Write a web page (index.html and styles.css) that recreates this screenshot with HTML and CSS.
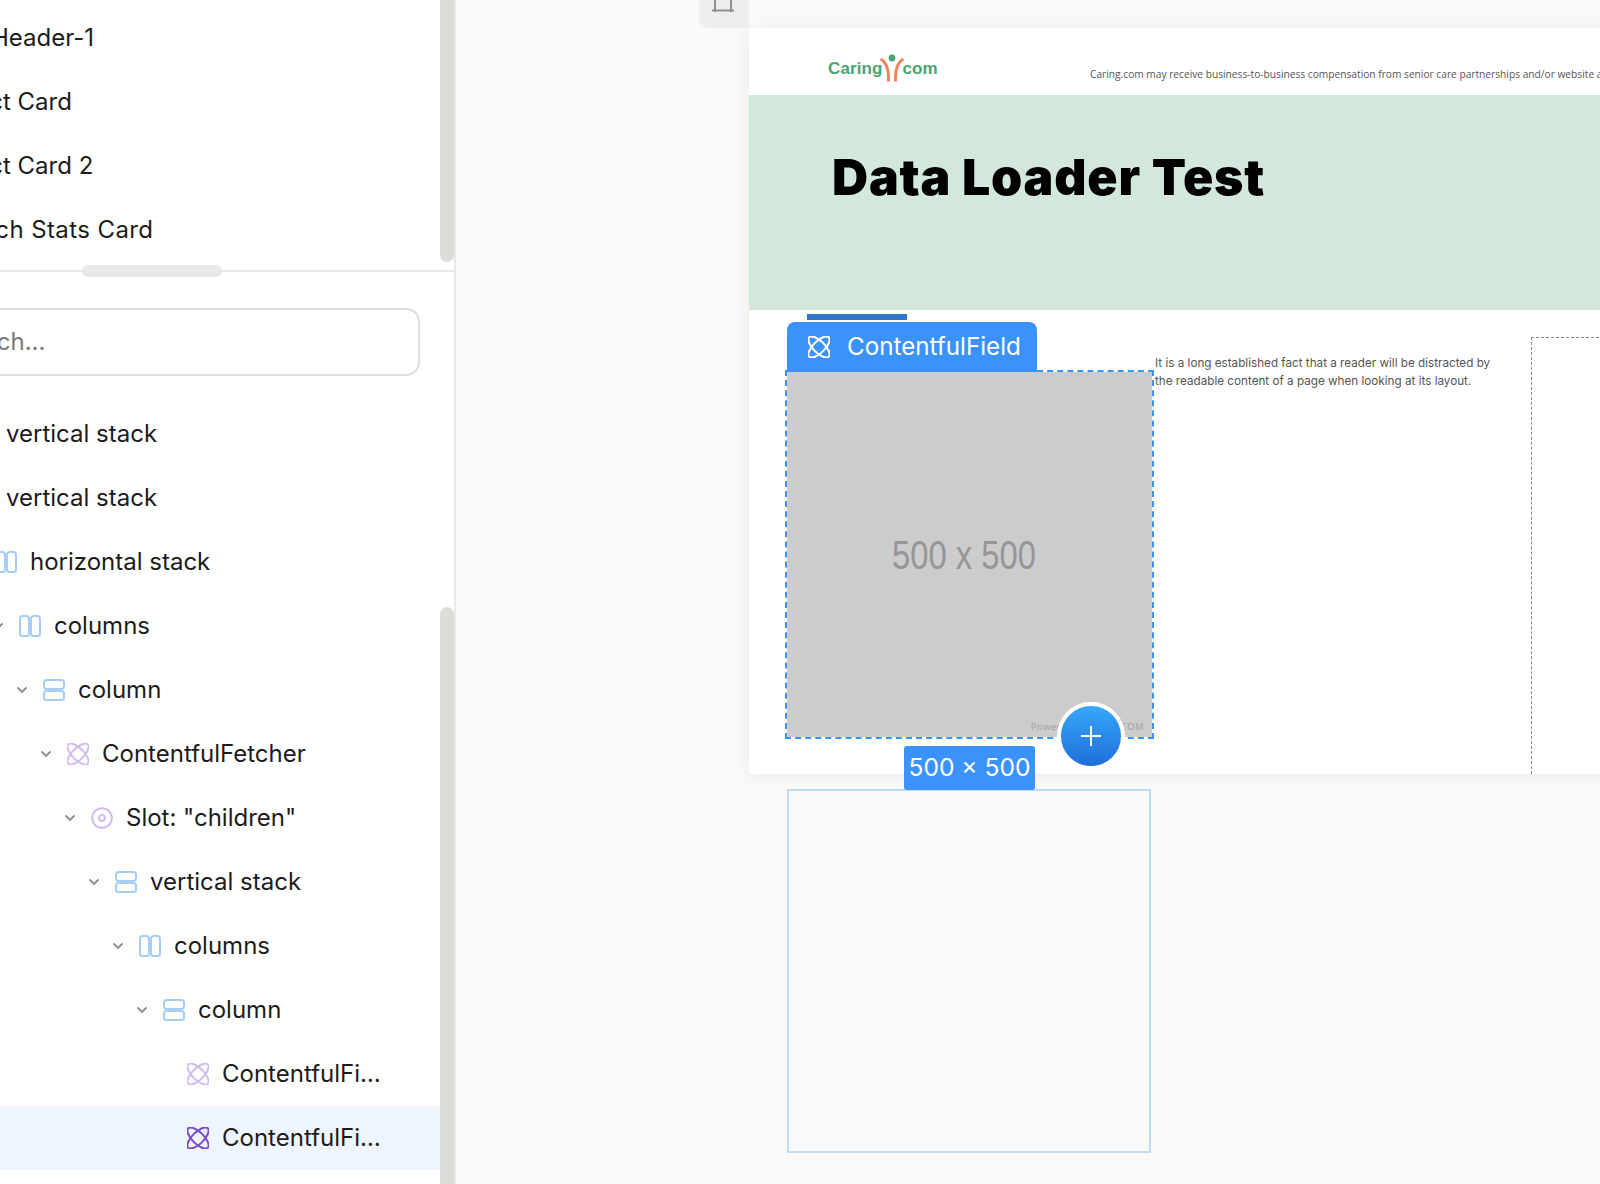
FILE: index.html
```html
<!DOCTYPE html>
<html lang="en">
<head>
    <meta charset="UTF-8">
    <title>Data Loader Test</title>
    <meta name="viewport" content="width=device-width,initial-scale=1">
    <link rel="stylesheet" href="styles.css">
</head>
<body>

<svg class="defs" width="0" height="0">
    <symbol id="i-stack" viewBox="0 0 22 22"><rect x="1" y="1" width="20" height="9" rx="2.5"/><rect x="1" y="12" width="20" height="9" rx="2.5"/></symbol>
    <symbol id="i-cols" viewBox="0 0 22 22"><rect x="1" y="1" width="9" height="20" rx="2.5"/><rect x="12" y="1" width="9" height="20" rx="2.5"/></symbol>
    <symbol id="i-atom" viewBox="0 0 22 22"><ellipse cx="11" cy="11" rx="13.800" ry="5.800" transform="rotate(45 11 11)"/><ellipse cx="11" cy="11" rx="13.800" ry="5.800" transform="rotate(-45 11 11)"/></symbol>
    <symbol id="i-slot" viewBox="0 0 22 22"><circle cx="11" cy="11" r="9.800"/><circle cx="11" cy="11" r="3"/></symbol>
    <symbol id="i-chev" viewBox="0 0 12 8"><path d="M1.500 1.500 6 6l4.500-4.500"/></symbol>
</svg>

<div class="app">
    <aside class="sidebar">
        <div class="pane-top">
            <div class="row lv-a"><span class="label">Header-1</span></div>
            <div class="row lv-b"><span class="label">Product Card</span></div>
            <div class="row lv-b"><span class="label">Product Card 2</span></div>
            <div class="row lv-c"><span class="label">Search Stats Card</span></div>
            <div class="thumb thumb-up"></div>
            <div class="handle"></div>
        </div>

        <div class="search"><span>Search...</span></div>

        <div class="tree">
            <div class="row d0"><span class="chev"></span><svg class="ico blue"><use href="#i-stack"/></svg><span class="label">vertical stack</span></div>
            <div class="row d0"><span class="chev"></span><svg class="ico blue"><use href="#i-stack"/></svg><span class="label">vertical stack</span></div>
            <div class="row d1"><span class="chev"></span><svg class="ico blue"><use href="#i-cols"/></svg><span class="label">horizontal stack</span></div>
            <div class="row d2"><svg class="chev"><use href="#i-chev"/></svg><svg class="ico blue"><use href="#i-cols"/></svg><span class="label">columns</span></div>
            <div class="row d3"><svg class="chev"><use href="#i-chev"/></svg><svg class="ico blue"><use href="#i-stack"/></svg><span class="label">column</span></div>
            <div class="row d4"><svg class="chev"><use href="#i-chev"/></svg><svg class="ico purple"><use href="#i-atom"/></svg><span class="label">ContentfulFetcher</span></div>
            <div class="row d5"><svg class="chev"><use href="#i-chev"/></svg><svg class="ico purple"><use href="#i-slot"/></svg><span class="label">Slot: "children"</span></div>
            <div class="row d6"><svg class="chev"><use href="#i-chev"/></svg><svg class="ico blue"><use href="#i-stack"/></svg><span class="label">vertical stack</span></div>
            <div class="row d7"><svg class="chev"><use href="#i-chev"/></svg><svg class="ico blue"><use href="#i-cols"/></svg><span class="label">columns</span></div>
            <div class="row d8"><svg class="chev"><use href="#i-chev"/></svg><svg class="ico blue"><use href="#i-stack"/></svg><span class="label">column</span></div>
            <div class="row d9"><span class="chev"></span><svg class="ico purple"><use href="#i-atom"/></svg><span class="label cut">ContentfulField</span></div>
            <div class="row d9 selected"><span class="chev"></span><svg class="ico violet"><use href="#i-atom"/></svg><span class="label cut">ContentfulField</span></div>
        </div>
        <div class="thumb thumb-down"></div>
    </aside>

    <main class="canvas">
        <div class="toolbar">
            <div class="tool">
                <svg width="24" height="14" viewBox="0 0 24 14"><path d="M4 0v12M20 0v12M1 10.500h22"/></svg>
            </div>
        </div>

        <div class="artboard">
            <header class="site-head">
                <div class="logo">
                    <span>Caring</span>
                    <svg width="26" height="28" viewBox="0 0 26 28">
                        <circle class="logo-dot" cx="13" cy="4" r="3.400"/>
                        <path class="logo-arms" d="M1.500 5C7 8 10 15 9.500 27.500M24.500 5C19 8 16 15 16.500 27.500"/>
                    </svg>
                    <span>com</span>
                </div>
                <p class="disclaimer">Caring.com may receive business-to-business compensation from senior care partnerships and/or website advertising.</p>
            </header>

            <section class="hero">
                <h1>Data Loader Test</h1>
            </section>

            <section class="content">
                <div class="media">
                    <div class="picked-bar"></div>
                    <div class="tag">
                        <svg class="tag-ico"><use href="#i-atom"/></svg>
                        <span>ContentfulField</span>
                    </div>
                    <div class="holder">
                        <span class="holder-size">500 x 500</span>
                        <span class="holder-credit">Powered by HTML.COM</span>
                    </div>
                    <div class="selection"></div>
                    <button class="add"><svg width="22" height="22" viewBox="0 0 22 22"><path d="M11 1v20M1 11h20"/></svg></button>
                    <div class="size-label">500 × 500</div>
                </div>
                <p class="copy">It is a long established fact that a reader will be distracted by the readable content of a page when looking at its layout.</p>
                <div class="slot-empty"></div>
            </section>
        </div>

        <div class="drop-box"></div>
    </main>
</div>

</body>
</html>
```

FILE: styles.css
```css
html,body{
    margin: 0;
    height: 100%;
    overflow: hidden;
}
body{
    background: #f9f9f7;
    font-family: Inter, "Liberation Sans", sans-serif;
    color: #1c1c1c;
}
.defs{
    position: absolute;
}
.app{
    display: flex;
    height: 1184px;
}

/* sidebar */
.sidebar{
    width: 454px;
    flex: none;
    position: relative;
    background: #fff;
    border-right: 2px solid #e8e8e6;
    overflow: hidden;
}
.pane-top{
    height: 272px;
    padding-top: 5px;
    box-sizing: border-box;
    border-bottom: 2px solid #e8e8e6;
}
.row{
    height: 64px;
    display: flex;
    align-items: center;
    font-size: 24px;
    white-space: nowrap;
}
.label{
    flex: none;
}
.lv-a{ margin-left: -9px; }
.lv-b{ margin-left: -78px; }
.lv-c{
    margin-left: -58px;
    letter-spacing: 0.4px;
}

.thumb{
    position: absolute;
    right: 0;
    width: 14px;
    background: #dcdcd9;
}
.thumb-up{
    top: 0;
    height: 262px;
    border-radius: 0 0 7px 7px;
}
.thumb-down{
    top: 607px;
    bottom: 0;
    border-radius: 7px 7px 0 0;
}
.handle{
    position: absolute;
    left: 82px;
    top: 265px;
    width: 140px;
    height: 12px;
    border-radius: 6px;
    background: #e8e8e8;
}

.search{
    height: 68px;
    width: 477px;
    margin: 36px 0 0 -57px;
    box-sizing: border-box;
    border: 2px solid #dddcd8;
    border-radius: 14px;
    display: flex;
    align-items: center;
    font-size: 24px;
    color: #7a7a7a;
}
.search span{
    margin-bottom: 2px;
}

.tree{
    margin-top: 26px;
}
.tree .label{
    margin-bottom: 2px;
}
.chev{
    width: 12px;
    height: 8px;
    flex: none;
    margin: 0 15px 0 -1px;
    fill: none;
    stroke: #8c8c8c;
    stroke-width: 1.800;
}
.ico{
    width: 22px;
    height: 22px;
    flex: none;
    margin-right: 13px;
    fill: none;
    stroke-width: 2;
    overflow: visible;
}
.blue{ stroke: #a6cdf4; }
.purple{ stroke: #d3bcee; }
.violet{ stroke: #7d4fc6; }
.d0{ margin-left: -55px; }
.d1{ margin-left: -31px; }
.d2{ margin-left: -7px; }
.d3{ margin-left: 17px; }
.d4{ margin-left: 41px; }
.d5{ margin-left: 65px; }
.d6{ margin-left: 89px; }
.d7{ margin-left: 113px; }
.d8{ margin-left: 137px; }
.d9{ padding-left: 161px; }
.cut{
    width: 163px;
    overflow: hidden;
    text-overflow: ellipsis;
}
.selected{
    background: #eef5fe;
}

/* canvas */
.canvas{
    flex: 1;
    min-width: 0;
    overflow: hidden;
    position: relative;
}
.toolbar{
    height: 28px;
    padding-left: 243px;
}
.tool{
    width: 50px;
    height: 28px;
    background: #eeeeec;
    border-radius: 0 0 0 10px;
    padding-left: 12px;
    box-sizing: border-box;
}
.tool svg{
    display: block;
    fill: none;
    stroke: #8f8f8f;
    stroke-width: 2;
}
.artboard{
    margin-left: 293px;
    width: 1000px;
    background: #fff;
    box-shadow: 0 2px 14px rgba(0,0,0,0.06);
}
.site-head{
    height: 67px;
    display: flex;
    padding-left: 79px;
    box-sizing: border-box;
}
.logo{
    display: flex;
    align-items: flex-end;
    height: 54px;
    color: #4aa470;
    font: bold 17px "Liberation Sans", sans-serif;
    letter-spacing: 0.1px;
    width: 262px;
    flex: none;
}
.logo svg{
    margin: 0 -3px;
    flex: none;
}
.logo span{
    margin-bottom: 3px;
}
.logo-dot{
    fill: #4aa470;
}
.logo-arms{
    fill: none;
    stroke: #f0845f;
    stroke-width: 3;
}
.disclaimer{
    margin: 39px 0 0;
    font: 10.200px "Open Sans", sans-serif;
    color: #555;
    white-space: nowrap;
}
.hero{
    height: 215px;
    background: #d3e8dc;
    padding: 50px 0 0 83px;
    box-sizing: border-box;
}
.hero h1{
    margin: 0;
    font: 900 50px/64px Inter, sans-serif;
    color: #000;
    letter-spacing: 0.8px;
}
.content{
    height: 464px;
    display: flex;
    padding-left: 38px;
    box-sizing: border-box;
}
.media{
    position: relative;
    width: 364px;
    padding-top: 62px;
    flex: none;
}
.holder{
    width: 365px;
    height: 365px;
    background: #ccc;
    position: relative;
    display: flex;
    align-items: center;
    justify-content: center;
    font-family: "Liberation Sans", sans-serif;
}
.holder-size{
    font-size: 41px;
    color: #969696;
    transform: translate(-5px,1px) scaleX(0.8);
    white-space: nowrap;
}
.holder-credit{
    position: absolute;
    right: 8px;
    bottom: 4px;
    font: 9.500px "Open Sans", sans-serif;
    color: #a0a0a0;
    letter-spacing: 0.450px;
}
.picked-bar{
    position: absolute;
    left: 20px;
    top: 4px;
    width: 100px;
    height: 6px;
    background: #3275c8;
}
.tag{
    position: absolute;
    left: 0;
    top: 12px;
    width: 250px;
    height: 50px;
    box-sizing: border-box;
    padding-left: 21px;
    background: #3c92fb;
    border-radius: 8px 8px 0 0;
    color: #fff;
    font-size: 24.200px;
    display: flex;
    align-items: center;
    z-index: 2;
}
.tag span{
    margin-bottom: 2px;
}
.tag-ico{
    width: 22px;
    height: 22px;
    margin-right: 17px;
    fill: none;
    stroke: #fff;
    stroke-width: 2;
    overflow: visible;
}
.selection{
    position: absolute;
    left: -2px;
    top: 60px;
    width: 365px;
    height: 365px;
    border: 2px dashed #3c92fb;
}
.add{
    position: absolute;
    left: 270px;
    top: 392px;
    width: 68px;
    height: 68px;
    padding: 0;
    border: 4px solid #fff;
    border-radius: 50%;
    background: linear-gradient(#37a7fb,#1e6fd8);
    display: flex;
    align-items: center;
    justify-content: center;
}
.add svg{
    fill: none;
    stroke: #fff;
    stroke-width: 2;
}
.size-label{
    position: absolute;
    left: 117px;
    top: 436px;
    width: 131px;
    height: 44px;
    line-height: 42px;
    text-align: center;
    background: #3c92fb;
    border-radius: 3px;
    color: #fff;
    font-size: 24.600px;
    z-index: 2;
}
.copy{
    margin: 44px 0 0 4px;
    width: 345px;
    flex: none;
    font-size: 11.700px;
    line-height: 18.400px;
    color: #555;
}
.slot-empty{
    margin: 27px 0 0 31px;
    flex: 1;
    border-top: 1px dashed #888;
    border-left: 1px dashed #888;
}
.drop-box{
    margin: 15px 0 0 331px;
    width: 360px;
    height: 360px;
    border: 2px solid #bcdcf8;
}
```
